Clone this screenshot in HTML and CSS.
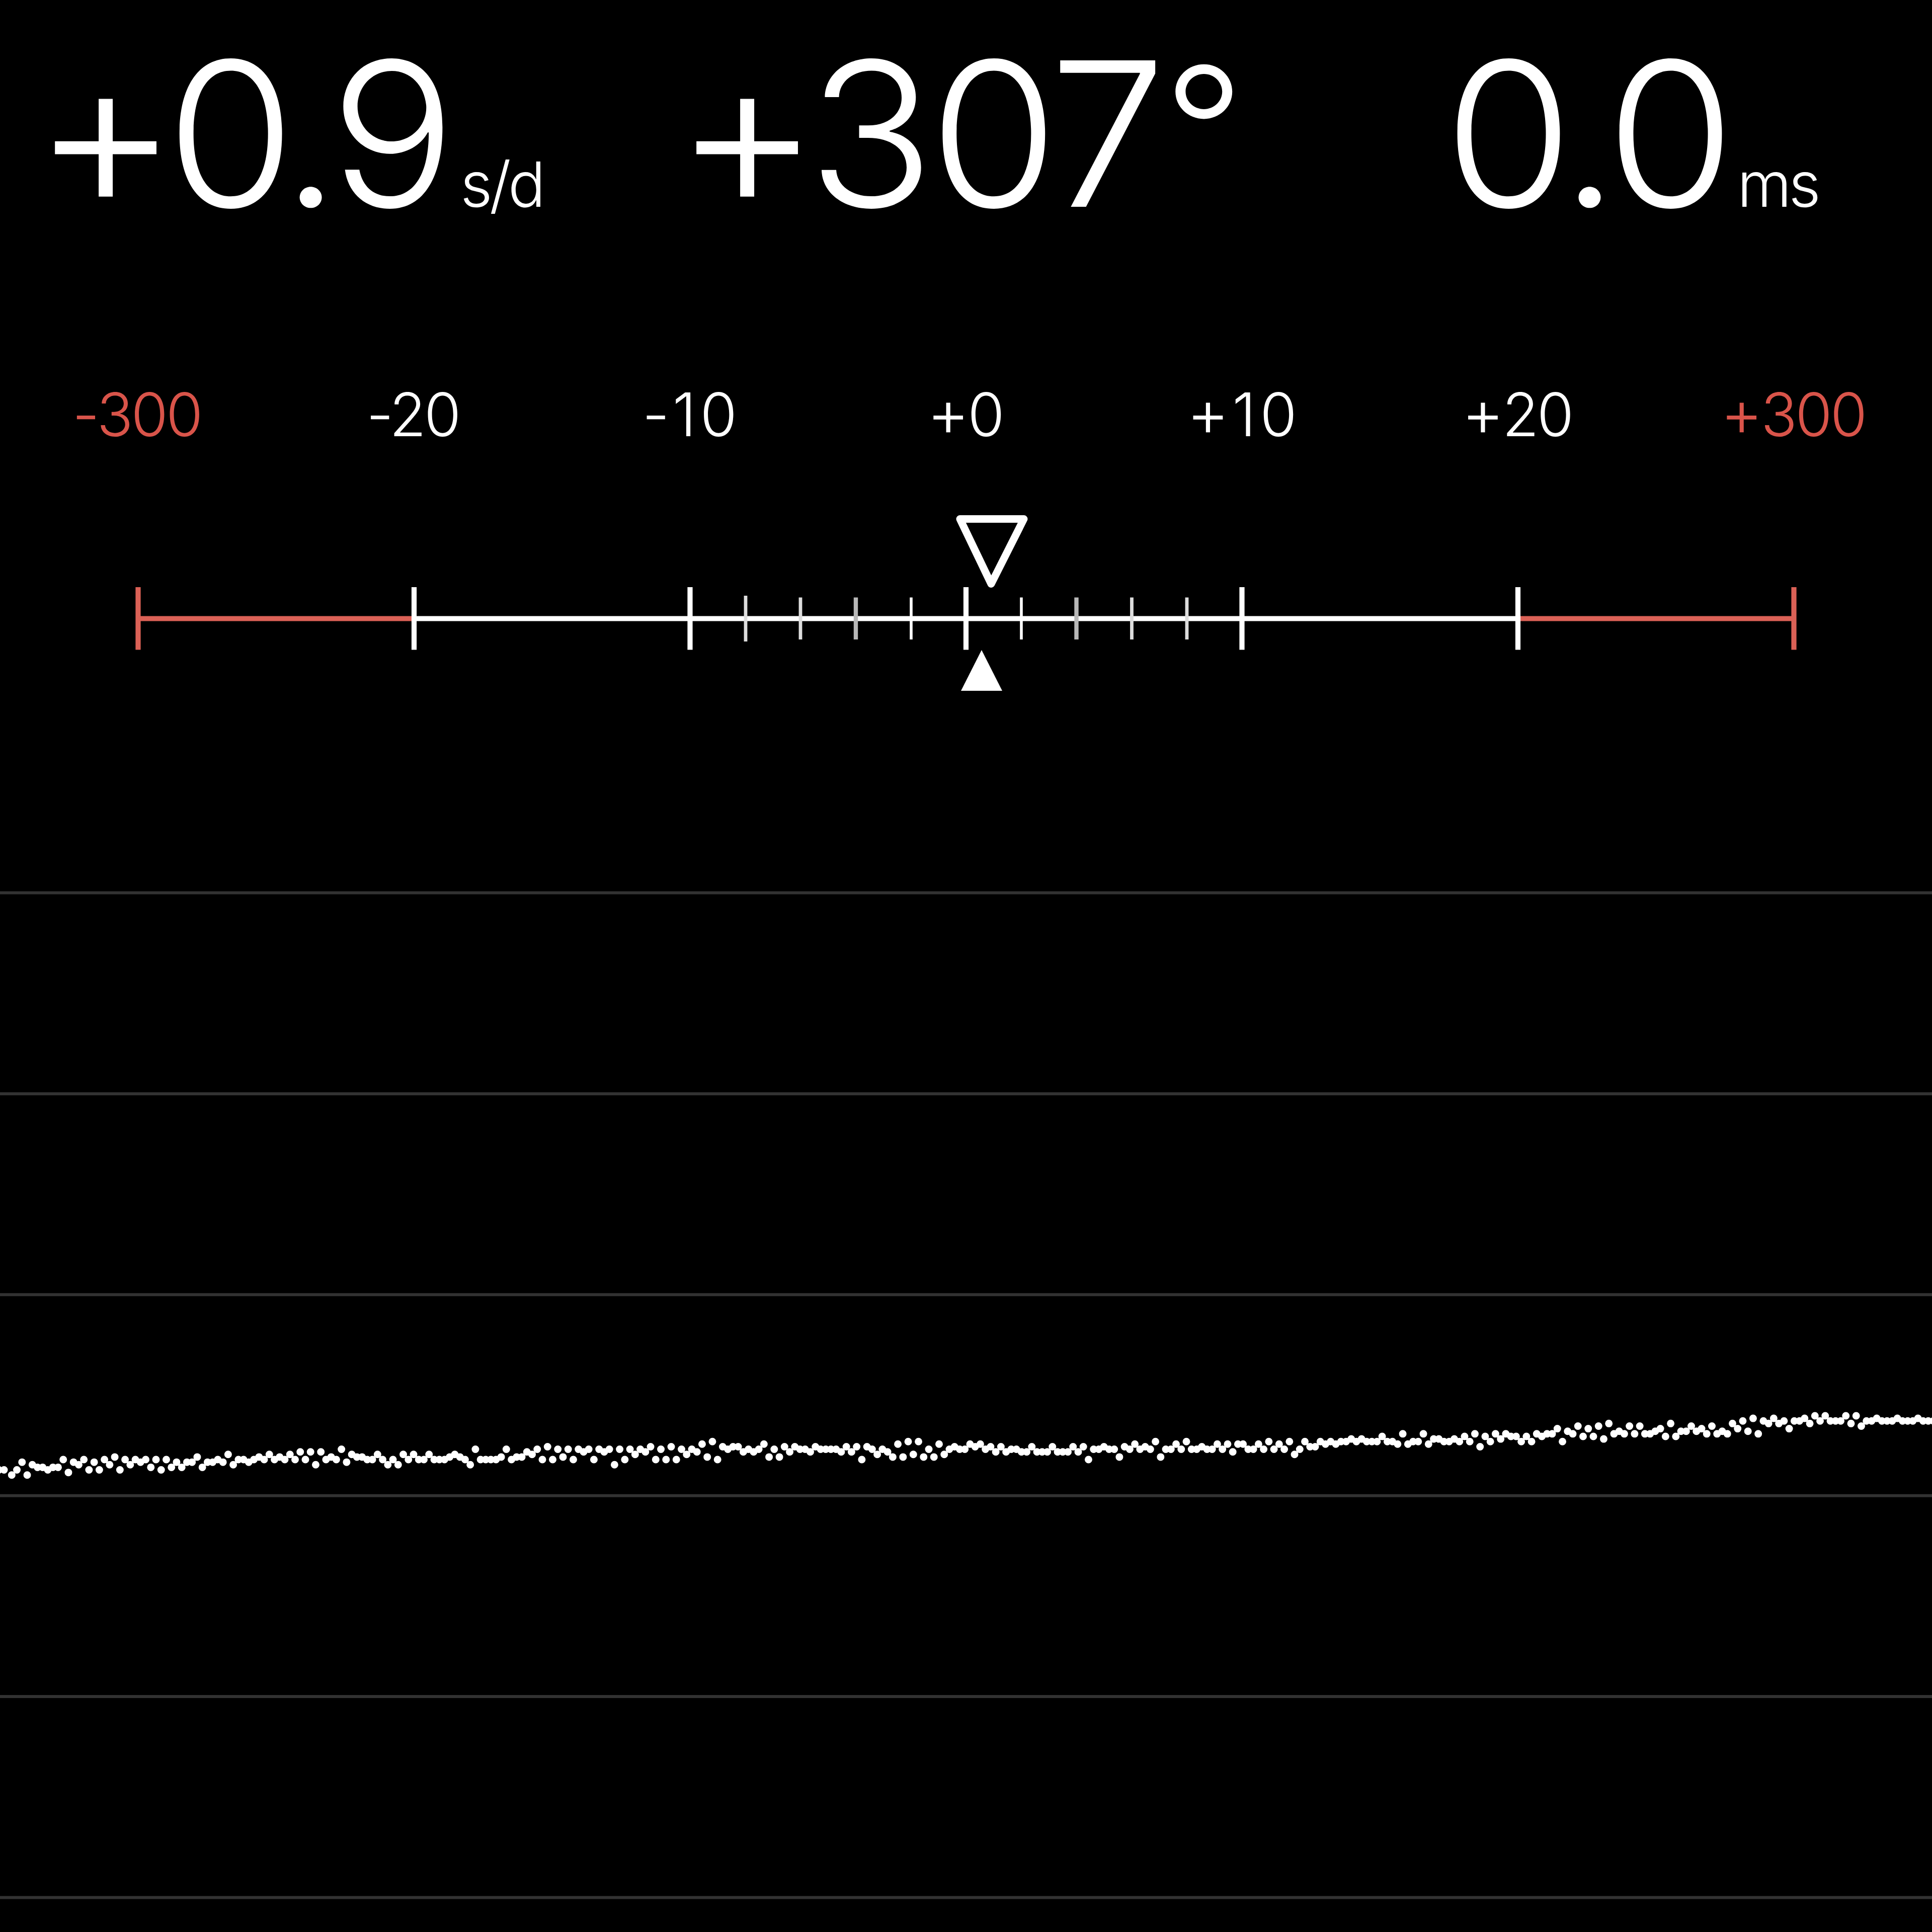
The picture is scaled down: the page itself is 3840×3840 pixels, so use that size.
FILE: index.html
```html
<!DOCTYPE html>
<html lang="en">
<head>
<meta charset="utf-8">
<title>Timegrapher</title>
<link rel="stylesheet" href="styles.css">
</head>
<body>
<main class="screen">
  <header class="readouts">
    <div class="readout rate"><span class="value"><span class="sign">+</span>0.9</span><span class="unit">s/d</span></div>
    <div class="readout amplitude"><span class="value"><span class="sign">+</span>307<span class="degree">°</span></span></div>
    <div class="readout beat"><span class="value">0.0</span><span class="unit">ms</span></div>
  </header>
  <section class="scale">
    <div class="labels">
      <div class="limit">-300</div>
      <div>-20</div>
      <div>-<span class="one">1</span>0</div>
      <div><span class="plus">+</span>0</div>
      <div><span class="plus">+</span><span class="one">1</span>0</div>
      <div><span class="plus">+</span>20</div>
      <div class="limit"><span class="plus">+</span>300</div>
    </div>
    <svg class="gauge" viewBox="0 1000 3840 400" width="3840" height="400">
      <g class="red-line">
        <path d="M274 1229.5H823M3017 1229.5H3566"/>
        <path d="M274.5 1167V1291.5M3565.5 1167V1291.5"/>
      </g>
      <g class="major">
        <path d="M819 1229.5H3021"/>
        <path d="M823 1167V1291.5M1371.5 1167V1291.5M1920 1167V1291.5M2468.5 1167V1291.5M3017 1167V1291.5"/>
      </g>
      <path class="minor sharp" d="M1811 1187.5V1271M2030 1187.5V1271"/>
      <path class="minor mid" d="M1482 1184V1275M1591 1187.5V1271M2249.5 1187.5V1271M2359 1187.5V1271"/>
      <path class="minor soft" d="M1701 1187.5V1271M2139.5 1187.5V1271"/>
      <path class="needle" d="M1908 1031.5H2035L1970 1160.5Z"/>
      <path class="pointer" d="M1951 1292L1992 1373H1910Z"/>
    </svg>
  </section>
  <section class="trace">
    <svg id="plot" class="plot" viewBox="0 1700 3840 2140" width="3840" height="2140">
      <path class="grid" d="M0 1774.6H3840M0 2174H3840M0 2573.3H3840M0 2972.7H3840M0 3372H3840M0 3771.4H3840"/>
      <path id="beats" class="beats" d=""/>
    </svg>
  </section>
</main>
<script src="trace.js"></script>
</body>
</html>
```
FILE: styles.css
```css
* { box-sizing: border-box; }
body { margin: 0; background: #000; color: #fff; font-family: Inter, "Liberation Sans", sans-serif; font-weight: 300; }
.screen { width: 3840px; height: 3840px; overflow: hidden; display: flex; flex-direction: column; background: #000; }
.readouts { height: 700px; display: grid; grid-template-columns: 1280px 1280px 1280px; }
.readout { height: 530px; display: flex; align-items: baseline; white-space: nowrap; font-feature-settings: "calt" 0; }
.rate { padding-left: 64px; }
.amplitude { padding-left: 59px; }
.beat { padding-left: 310px; }
.value { font-size: 400px; line-height: 530px; transform: scaleX(1.04); transform-origin: left; }
.rate .value { letter-spacing: -17px; }
.amplitude .value { letter-spacing: -10px; }
.beat .value { letter-spacing: -15px; }
.value .sign { font-size: 430px; line-height: 0; letter-spacing: 0; margin-right: -25px; vertical-align: -5px; }
.degree { font-size: 342px; line-height: 0; vertical-align: 32px; margin-left: 4px; }
.unit { font-size: 124px; letter-spacing: -6px; }
.rate .unit { margin-left: 58px; }
.beat .unit { margin-left: 41px; }
.labels { height: 300px; padding-top: 44px; display: grid; grid-template-columns: repeat(7, 1fr); text-align: center; font-size: 119px; line-height: 160px; letter-spacing: -4px; font-feature-settings: "calt" 0; }
.labels div { padding-right: 5px; }
.one { margin: 0 12px 0 10px; }
.plus { font-size: 130px; line-height: 0; }
.limit { color: #d9544a; }
.gauge, .plot { display: block; }
.scale { height: 1000px; }
.red-line { stroke: #db6156; stroke-width: 10.2; fill: none; }
.major { stroke: #fff; stroke-width: 10.2; fill: none; }
.minor { fill: none; }
.sharp { stroke: #fff; stroke-width: 5.6; }
.mid { stroke: #ddd; stroke-width: 6.8; }
.soft { stroke: #b8b8b8; stroke-width: 8.4; }
.needle { fill: none; stroke: #fff; stroke-width: 15; stroke-linejoin: round; }
.pointer { fill: #fff; }
.trace { height: 2140px; }
.grid { stroke: #323232; stroke-width: 6; }
.beats { fill: none; stroke: #fff; stroke-width: 15; stroke-linecap: round; }
```
FILE: trace.js
```js
// One reading per beat: vertical offset in steps, downwards from the top of the trace.
const readings = [
  23,21,18,23,19,20,20,21,20,20,17,22,18,19,17,21,18,21,17,19,16,21,17,19,17,18,17,20,17,21,
  17,20,18,20,18,18,16,20,18,18,17,18,15,19,17,17,18,17,16,17,15,17,16,17,15,17,14,17,14,19,
  14,17,16,17,13,18,15,16,16,17,17,15,17,19,17,19,15,17,15,17,17,15,17,17,17,16,15,16,17,19,
  13,17,17,17,17,16,13,17,16,16,14,15,13,17,12,17,13,16,13,17,13,14,13,17,13,14,13,19,13,17,
  13,15,13,14,12,17,13,17,12,17,13,15,13,14,11,16,10,17,12,13,12,12,14,13,14,13,11,16,13,16,
  12,14,12,13,13,14,12,13,13,13,13,14,12,14,12,17,12,13,15,13,14,16,11,16,10,15,10,16,13,16,
  11,15,13,12,13,13,11,12,11,13,12,14,12,14,13,13,14,14,12,14,14,14,12,14,14,14,12,14,12,17,
  13,13,12,13,13,16,12,13,11,13,12,13,10,16,13,13,11,13,10,13,13,12,13,13,11,13,11,14,11,11,
  13,13,11,13,10,13,11,13,10,15,13,10,12,12,10,11,10,11,10,10,9,10,9,10,10,10,8,10,10,11,
  7,11,10,10,7,11,9,9,10,10,9,10,8,10,7,12,8,10,7,9,7,8,8,10,8,10,7,8,7,7,
  5,10,6,7,4,8,5,8,4,9,3,7,6,7,4,7,4,7,7,6,5,8,3,8,6,6,4,6,5,7,
  4,7,6,7,3,5,2,6,1,7,2,3,1,3,2,5,2,2,1,3,0,2,0,2,2,2,0,3,0,4,
  2,2,1,2,2,2,1,2,2,2,1,2,2,2
];
const step = 10.24;
const points = readings.map((v, i) => [23.3 + i * step, 2814 + v * 5.12]);
points.unshift([-2.3, 2921.5], [8, 2921.5]);
document.getElementById('beats').setAttribute(
  'd', points.map(([x, y]) => `M${x.toFixed(2)} ${y.toFixed(2)}h0.01`).join('')
);
```
